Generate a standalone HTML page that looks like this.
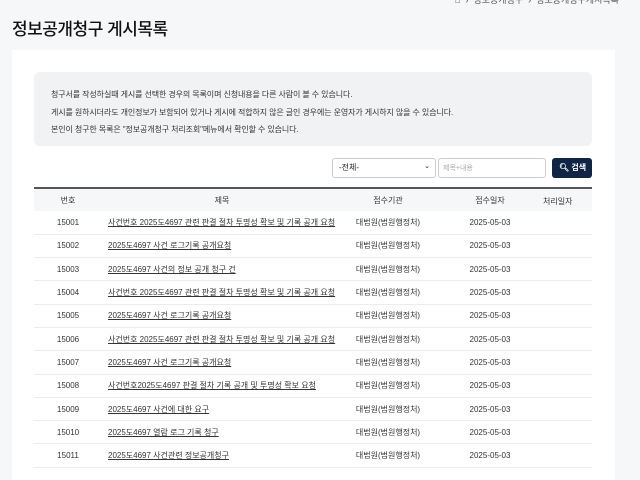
<!DOCTYPE html>
<html><head><meta charset="utf-8"><style>
*{margin:0;padding:0;box-sizing:border-box}
body{width:640px;height:469px;overflow:hidden;background:#f6f7f8;font-family:"Liberation Sans","Noto Sans CJK KR",sans-serif;color:#222;position:relative}
.bc{position:absolute;top:-7px;left:455px;font-size:9px;color:#555;white-space:nowrap}
h1{position:absolute;left:12px;top:15px;font-size:17px;font-weight:500;color:#111;letter-spacing:-0.5px}
.card{position:absolute;left:12px;top:50px;width:603px;height:430px;background:#fff}
.info{position:absolute;left:34px;top:72px;width:558px;height:74px;background:#f1f2f4;border-radius:6px;font-size:8px;color:#333;padding:14px 0 0 17px;line-height:17.5px;letter-spacing:-0.1px}
.sel{position:absolute;left:332px;top:158px;width:104px;height:20px;border:1px solid #ccc;border-radius:3px;font-size:8px;padding:3px 6px;background:#fff}
.sel span{position:absolute;right:5px;top:3px;font-size:7px}
.inp{position:absolute;left:438px;top:158px;width:108px;height:20px;border:1px solid #ccc;border-radius:3px;font-size:7px;color:#aaa;padding:4px 4px;background:#fff}
.btn{position:absolute;left:552px;top:158px;width:40px;height:20px;background:#102446;border-radius:3px;color:#fff;font-size:8px;font-weight:bold;padding:4px 0 0 7px;white-space:nowrap}
table{position:absolute;left:34px;top:187px;width:558px;border-collapse:collapse;border-top:2px solid #555;font-size:8px;table-layout:fixed}
th{background:#f6f7f8;font-weight:normal;height:23px;color:#333}
th.l{padding-right:24px}
td{height:23.3px;border-bottom:1px solid #ececec;text-align:center;color:#333;white-space:nowrap;overflow:visible}
td.t{text-align:left;padding-left:6px}
td.t a{color:#333;text-decoration:underline}
</style></head><body>
<div class="bc">⌂ &nbsp;›&nbsp; 정보공개청구 &nbsp;›&nbsp; 정보공개청구게시목록</div>
<h1>정보공개청구 게시목록</h1>
<div class="card"></div>
<div class="info">청구서를 작성하실때 게시를 선택한 경우의 목록이며 신청내용을 다른 사람이 볼 수 있습니다.<br>게시를 원하시더라도 개인정보가 보함되어 있거나 게시에 적합하지 않은 글인 경우에는 운영자가 게시하지 않을 수 있습니다.<br>본인이 청구한 목록은 "정보공개청구 처리조회"메뉴에서 확인할 수 있습니다.</div>
<div class="sel">-전체-<span>⌄</span></div>
<div class="inp">제목+내용</div>
<div class="btn">🔍︎ 검색</div>
<table>
<colgroup><col style="width:68px"><col style="width:240px"><col style="width:92px"><col style="width:112px"><col style="width:46px"></colgroup>
<tr><th>번호</th><th>제목</th><th>접수기관</th><th>접수일자</th><th class="l" style="padding-right:0;text-align:left;position:relative"><span style="position:absolute;left:-3px;top:7px">처리일자</span></th></tr>
<tr><td>15001</td><td class="t"><a>사건번호 2025도4697 관련 판결 절차 투명성 확보 및 기록 공개 요청</a></td><td>대법원(법원행정처)</td><td>2025-05-03</td><td></td></tr>
<tr><td>15002</td><td class="t"><a>2025도4697 사건 로그기록 공개요청</a></td><td>대법원(법원행정처)</td><td>2025-05-03</td><td></td></tr>
<tr><td>15003</td><td class="t"><a>2025도4697 사건의 정보 공개 청구 건</a></td><td>대법원(법원행정처)</td><td>2025-05-03</td><td></td></tr>
<tr><td>15004</td><td class="t"><a>사건번호 2025도4697 관련 판결 절차 투명성 확보 및 기록 공개 요청</a></td><td>대법원(법원행정처)</td><td>2025-05-03</td><td></td></tr>
<tr><td>15005</td><td class="t"><a>2025도4697 사건 로그기록 공개요청</a></td><td>대법원(법원행정처)</td><td>2025-05-03</td><td></td></tr>
<tr><td>15006</td><td class="t"><a>사건번호 2025도4697 관련 판결 절차 투명성 확보 및 기록 공개 요청</a></td><td>대법원(법원행정처)</td><td>2025-05-03</td><td></td></tr>
<tr><td>15007</td><td class="t"><a>2025도4697 사건 로그기록 공개요청</a></td><td>대법원(법원행정처)</td><td>2025-05-03</td><td></td></tr>
<tr><td>15008</td><td class="t"><a>사건번호2025도4697 판결 절차 기록 공개 및 투명성 확보 요청</a></td><td>대법원(법원행정처)</td><td>2025-05-03</td><td></td></tr>
<tr><td>15009</td><td class="t"><a>2025도4697 사건에 대한 요구</a></td><td>대법원(법원행정처)</td><td>2025-05-03</td><td></td></tr>
<tr><td>15010</td><td class="t"><a>2025도4697 열람 로그 기록 청구</a></td><td>대법원(법원행정처)</td><td>2025-05-03</td><td></td></tr>
<tr><td>15011</td><td class="t"><a>2025도4697 사건관련 정보공개청구</a></td><td>대법원(법원행정처)</td><td>2025-05-03</td><td></td></tr>
</table>
</body></html>
